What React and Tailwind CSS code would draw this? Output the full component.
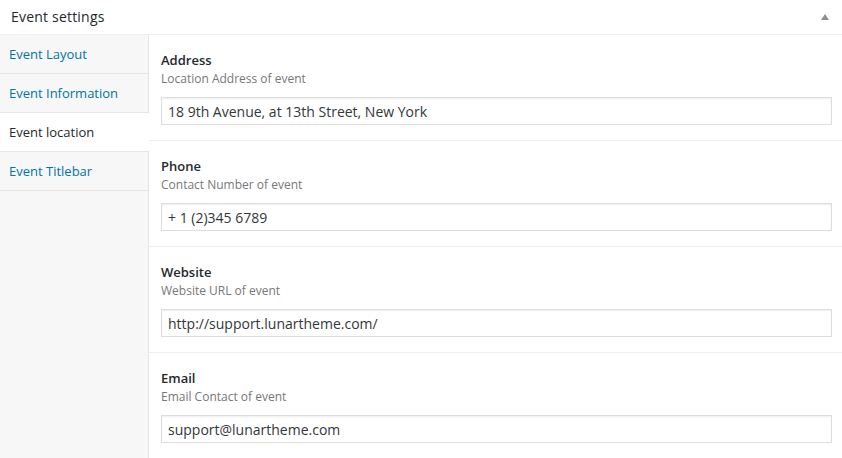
import React from "react";

const tabs = [
  { label: "Event Layout" },
  { label: "Event Information" },
  { label: "Event location", active: true },
  { label: "Event Titlebar" },
];

const fields = [
  { label: "Address", desc: "Location Address of event", value: "18 9th Avenue, at 13th Street, New York" },
  { label: "Phone", desc: "Contact Number of event", value: "+ 1 (2)345 6789" },
  { label: "Website", desc: "Website URL of event", value: "http://support.lunartheme.com/" },
  { label: "Email", desc: "Email Contact of event", value: "support@lunartheme.com" },
];

export default function App() {
  return (
    <div
      className="w-[842px] h-[458px] overflow-hidden bg-white text-[#23282d]"
      style={{ fontFamily: '"Open Sans", "Noto Sans", sans-serif' }}
    >
      <div className="h-[35px] flex items-center justify-between pl-[11px] pr-[13px] border-b border-[#eee]">
        <h2 className="text-[14px] font-medium leading-none tracking-[0.2px] text-[#23282d]">Event settings</h2>
        <svg width="8" height="6" viewBox="0 0 8 6" className="text-[#8c8f94]">
          <path d="M4 0 L8 6 L0 6 Z" fill="currentColor" />
        </svg>
      </div>
      <div className="flex h-[423px]">
        <ul className="w-[149px] shrink-0 bg-[#f7f7f7] border-r border-[#e5e5e5]">
          {tabs.map((t) => (
            <li
              key={t.label}
              className={
                t.active
                  ? "h-[39px] flex items-center pl-[9px] pt-[2px] text-[13px] bg-white text-[#23282d] border-b border-[#e5e5e5] -mr-px"
                  : "h-[39px] flex items-center pl-[9px] pt-[2px] text-[13px] text-[#0073aa] border-b border-[#e5e5e5]"
              }
            >
              {t.label}
            </li>
          ))}
        </ul>
        <div className="flex-1">
          {fields.map((f) => (
            <div key={f.label} className="pt-[16px] pb-[15px] pl-[12px] pr-[10px] border-b border-[#eee]">
              <div className="text-[13px] font-semibold leading-[18px] text-[#23282d]">{f.label}</div>
              <div className="mt-px text-[12px] leading-[18px] text-[#777]">{f.desc}</div>
              <input
                readOnly
                value={f.value}
                className="mt-[9px] w-full h-[28px] border border-[#ddd] pl-[6px] pr-[6px] pt-px text-[14px] text-[#32373c] outline-none shadow-[inset_0_1px_2px_rgba(0,0,0,0.07)]"
                style={{ fontFamily: '"Open Sans", "Noto Sans", sans-serif' }}
              />
            </div>
          ))}
        </div>
      </div>
    </div>
  );
}
